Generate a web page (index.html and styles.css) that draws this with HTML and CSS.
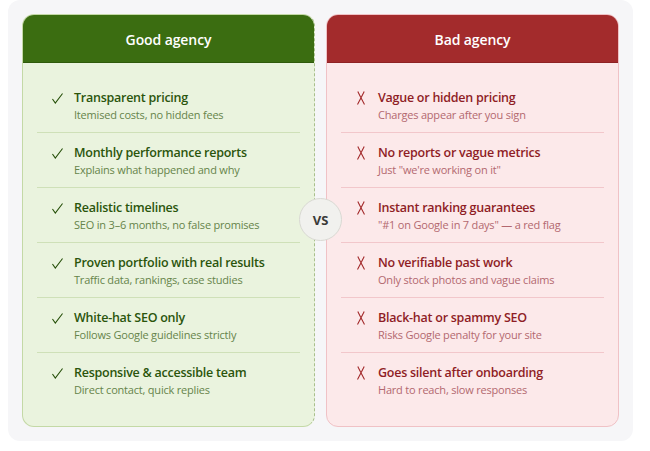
FILE: index.html
```html
<!DOCTYPE html>
<html>
<head>
<meta charset="utf-8">
<link rel="stylesheet" href="styles.css">
</head>
<body>
<div class="wrap">
  <section class="card good">
    <h2 class="head">Good agency</h2>
    <ul class="list">
      <li class="row"><svg class="ic" viewBox="0 0 12 12"><path d="M0.5 6.5 L3.6 11 L11.5 0.5"/></svg><div><div class="t">Transparent pricing</div><div class="s">Itemised costs, no hidden fees</div></div></li>
      <li class="row"><svg class="ic" viewBox="0 0 12 12"><path d="M0.5 6.5 L3.6 11 L11.5 0.5"/></svg><div><div class="t">Monthly performance reports</div><div class="s">Explains what happened and why</div></div></li>
      <li class="row"><svg class="ic" viewBox="0 0 12 12"><path d="M0.5 6.5 L3.6 11 L11.5 0.5"/></svg><div><div class="t">Realistic timelines</div><div class="s">SEO in 3–6 months, no false promises</div></div></li>
      <li class="row"><svg class="ic" viewBox="0 0 12 12"><path d="M0.5 6.5 L3.6 11 L11.5 0.5"/></svg><div><div class="t">Proven portfolio with real results</div><div class="s">Traffic data, rankings, case studies</div></div></li>
      <li class="row"><svg class="ic" viewBox="0 0 12 12"><path d="M0.5 6.5 L3.6 11 L11.5 0.5"/></svg><div><div class="t">White-hat SEO only</div><div class="s">Follows Google guidelines strictly</div></div></li>
      <li class="row"><svg class="ic" viewBox="0 0 12 12"><path d="M0.5 6.5 L3.6 11 L11.5 0.5"/></svg><div><div class="t">Responsive &amp; accessible team</div><div class="s">Direct contact, quick replies</div></div></li>
    </ul>
  </section>
  <div class="vs">VS</div>
  <section class="card bad">
    <h2 class="head">Bad agency</h2>
    <ul class="list">
      <li class="row"><svg class="ic x" viewBox="0 0 8 14"><path d="M0.8 0.5 Q3 5 7.5 13.5 M7.2 0.5 Q4.5 6 0.5 13.5"/></svg><div><div class="t">Vague or hidden pricing</div><div class="s">Charges appear after you sign</div></div></li>
      <li class="row"><svg class="ic x" viewBox="0 0 8 14"><path d="M0.8 0.5 Q3 5 7.5 13.5 M7.2 0.5 Q4.5 6 0.5 13.5"/></svg><div><div class="t">No reports or vague metrics</div><div class="s">Just "we're working on it"</div></div></li>
      <li class="row"><svg class="ic x" viewBox="0 0 8 14"><path d="M0.8 0.5 Q3 5 7.5 13.5 M7.2 0.5 Q4.5 6 0.5 13.5"/></svg><div><div class="t">Instant ranking guarantees</div><div class="s">"#1 on Google in 7 days" — a red flag</div></div></li>
      <li class="row"><svg class="ic x" viewBox="0 0 8 14"><path d="M0.8 0.5 Q3 5 7.5 13.5 M7.2 0.5 Q4.5 6 0.5 13.5"/></svg><div><div class="t">No verifiable past work</div><div class="s">Only stock photos and vague claims</div></div></li>
      <li class="row"><svg class="ic x" viewBox="0 0 8 14"><path d="M0.8 0.5 Q3 5 7.5 13.5 M7.2 0.5 Q4.5 6 0.5 13.5"/></svg><div><div class="t">Black-hat or spammy SEO</div><div class="s">Risks Google penalty for your site</div></div></li>
      <li class="row"><svg class="ic x" viewBox="0 0 8 14"><path d="M0.8 0.5 Q3 5 7.5 13.5 M7.2 0.5 Q4.5 6 0.5 13.5"/></svg><div><div class="t">Goes silent after onboarding</div><div class="s">Hard to reach, slow responses</div></div></li>
    </ul>
  </section>
</div>
</body>
</html>
```
FILE: styles.css
```css
* { box-sizing: border-box; }
html, body { margin: 0; padding: 0; background: #ffffff; }
body { padding: 0 8px; font-family: "Open Sans", "Noto Sans", sans-serif; }
.wrap {
  position: relative;
  width: 625px;
  height: 441px;
  background: #f6f6f8;
  border-radius: 12px;
  padding: 14px;
  display: grid;
  grid-template-columns: 293px 293px;
  column-gap: 11px;
}
.card {
  border-radius: 12px;
  overflow: hidden;
  display: flex;
  flex-direction: column;
}
.good { background: #eaf3de; border: 1px solid #c4d9a6; border-right: 1px dashed #a9bf8c; }
.bad { background: #fce9ea; border: 1px solid #f0c2c6; }
.head {
  margin: -1px -1px 0 -1px;
  height: 50px;
  display: flex;
  align-items: center;
  justify-content: center;
  padding-top: 2px;
  font-size: 14px;
  font-weight: 600;
  color: #ffffff;
  letter-spacing: -0.1px;
}
.good .head { background: #3b6d11; border-bottom: 1px solid #2f5a0b; }
.bad .head { background: #a32b2c; border-bottom: 1px solid #8e2224; }
.list {
  list-style: none;
  margin: 0;
  padding: 15px 14px 18px 14px;
}
.row {
  display: flex;
  align-items: flex-start;
  height: 55px;
  padding: 12px 0 0 15px;
  border-bottom: 1px solid #cfe0b8;
}
.bad .row { border-bottom-color: #f2c7cb; padding-left: 16px; }
.row:last-child { border-bottom: none; }
.ic { width: 11px; height: 11px; margin: 3px 11px 0 0; flex: none; fill: none; stroke: #27500a; stroke-width: 1.2; }
.ic.x { width: 8px; height: 14px; margin: 1px 13px 0 0; stroke: #a32b2c; stroke-width: 1.1; }
.t { font-size: 12.5px; font-weight: 600; line-height: 16px; color: #2b550c; letter-spacing: -0.25px; }
.s { font-size: 11px; line-height: 15px; margin-top: 1px; color: #66844a; letter-spacing: -0.2px; }
.bad .t { color: #8f1d25; }
.bad .s { color: #b3686f; }
.vs {
  position: absolute;
  left: 291px;
  top: 198px;
  width: 43px;
  height: 43px;
  border-radius: 50%;
  background: #f1f1ee;
  border: 1px solid #d9d9d3;
  display: flex;
  align-items: center;
  justify-content: center;
  font-size: 13px;
  font-weight: 700;
  color: #3a3a38;
}
```
